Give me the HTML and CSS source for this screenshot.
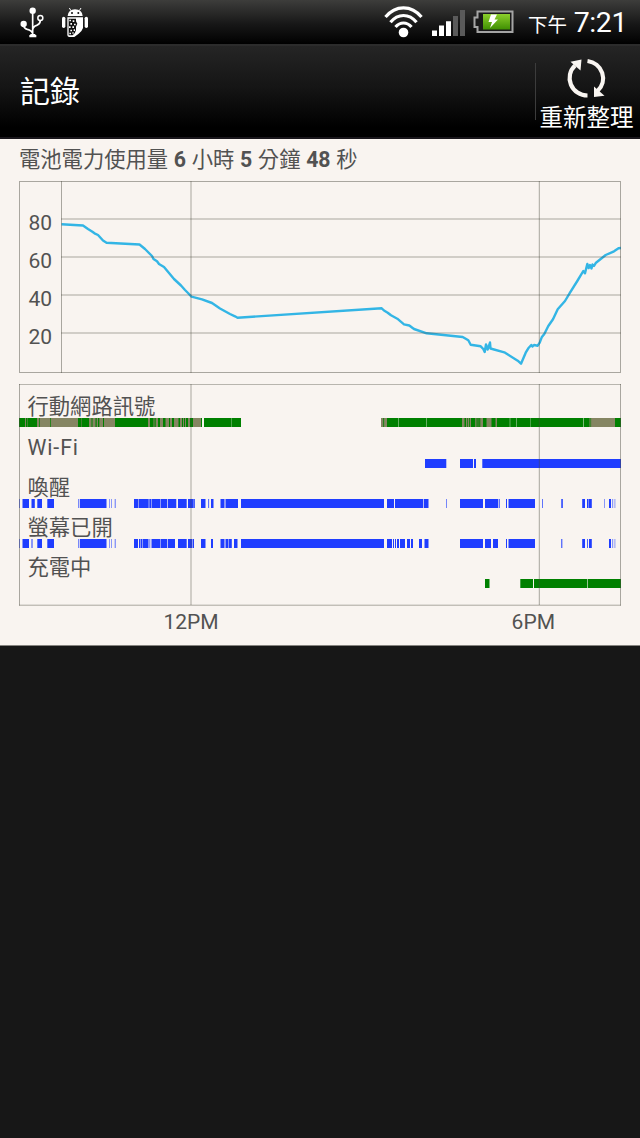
FILE: index.html
```html
<!DOCTYPE html>
<html lang="zh-Hant">
<head>
    <meta charset="UTF-8">
    <meta name="viewport" content="width=device-width, initial-scale=1.0">
    <title>記錄</title>
    <link rel="stylesheet" href="styles.css">
</head>
<body>

<!-- Status bar -->
<div class="status-bar">
    <svg class="icon-usb" width="26" height="34" viewBox="60 15 78 102">
        <g fill="none" stroke="#fff" stroke-width="5">
            <path d="M98 30V106M71 74Q71 85 82 88Q95 91 97 99M121 62Q120 73 110 76Q99 79 98 90"/>
            <circle cx="121" cy="54" r="7.5" stroke-width="4.5"/>
        </g>
        <g fill="#fff">
            <circle cx="98" cy="32" r="9.5"/>
            <circle cx="71" cy="72" r="9.5"/>
            <path d="M91 102H106V105H109V112H88V105H91z"/>
        </g>
    </svg>
    <svg class="icon-android" width="28" height="34" viewBox="183 15 84 102">
        <path d="M213 32L208 24M238 32L243 24" stroke="#fff" stroke-width="3"/>
        <path d="M203 48Q205 28 225 28Q246 28 248 48z" fill="#fff"/>
        <circle cx="216" cy="39" r="3" fill="#111"/>
        <circle cx="235" cy="39" r="3" fill="#111"/>
        <rect x="186" y="50" width="10" height="34" rx="5" fill="#fff"/>
        <rect x="254" y="50" width="10" height="34" rx="5" fill="#fff"/>
        <path d="M202 52H249V84Q246 94 236 101L223 111H207Q202 110 202 105z" fill="#fff"/>
        <path d="M206 56H228V64L232 71L228 80V90Q226 101 218 106H206z" fill="#111"/>
        <path d="M208 59h5v5h-5zM218 61h5v5h-5zM211 69h5v5h-5zM222 71h5v5h-5zM207 79h5v5h-5zM217 79h5v5h-5zM211 89h5v5h-5zM221 88h4v5h-4zM208 98h5v5h-5zM217 97h4v4h-4z" fill="#fff"/>
    </svg>
    <div class="spacer"></div>
    <svg class="icon-wifi" width="40" height="34" viewBox="0 0 40 34">
        <g fill="none" stroke="#fff" stroke-width="3.2">
            <path d="M1.5 12Q9 2.8 19.5 2.8T37.500 12"/>
            <path d="M6.500 17.300Q12 10.500 19.500 10.500T32.500 17.300"/>
            <path d="M11.500 22Q15 18 19.500 18T27.500 22"/>
        </g>
        <circle cx="19.500" cy="27.500" r="4.8" fill="#fff"/>
    </svg>
    <svg class="icon-signal" width="34" height="27" viewBox="0 0 34 27">
        <path d="M0 20.500h5V26H0zM7 15.500h5V26H7zM14 11.300h5V26h-5z" fill="#fff"/>
        <path d="M21 6h5v20h-5zM28 0h5v26h-5z" fill="#5a5a5a"/>
    </svg>
    <svg class="icon-battery" width="41" height="24" viewBox="0 0 41 24">
        <defs>
            <linearGradient id="charge" x1="0" y1="0" x2="0" y2="1">
                <stop offset="0" stop-color="#8ccf2c"/>
                <stop offset="1" stop-color="#3f8f02"/>
            </linearGradient>
        </defs>
        <path d="M4.500 1.500H39.500V22H4.500V17H1.500V7.500H4.500z" fill="#1a1a1a" stroke="#a5a5a5" stroke-width="2"/>
        <rect x="10" y="4" width="27" height="15.500" fill="url(#charge)"/>
        <path d="M18 4.500H24L21.500 9.500H25L17 18L19 12H15.500z" fill="#fff"/>
    </svg>
    <div class="clock"><span class="period">下午</span><span class="time">7:21</span></div>
</div>

<!-- Action bar -->
<div class="action-bar">
    <h1>記錄</h1>
    <div class="refresh">
        <svg width="42" height="42" viewBox="0 0 42 42">
            <g fill="none" stroke="#f9f5f1" stroke-width="4.200">
                <path d="M21.500 3A18 17.500 0 0 1 31.500 33"/>
                <path d="M21.500 37.500A18 17.500 0 0 1 9 7.500"/>
            </g>
            <path d="M4.500 3.800L15.500 1.500L14.500 12.500z" fill="#f9f5f1"/>
            <path d="M28 28.500V39L38.500 37.800z" fill="#f9f5f1"/>
        </svg>
        <span>重新整理</span>
    </div>
</div>

<!-- Battery history -->
<div class="history">
    <h2>電池電力使用量 <b>6</b> 小時 <b>5</b> 分鐘 <b>48</b> 秒</h2>

    <svg class="level-chart" width="602" height="192" viewBox="19 181 602 192">
        <polyline class="level" points="61.500,224.300 83,225.500 88,229 92,231.500 94.500,233.300 98,235 103,240.500 106.500,242.700 139.500,244.500 145,249 152,256 153.500,259 157,261.300 159,264 164,267 169,273 174,279 181,285.500 185,290 188,293 191.500,296.700 202,299.300 212,303 220,308.500 230,314 235,316.300 237.500,317.700 381.700,308.300 384,310.500 387.700,312.700 391,315.300 397.300,318.700 404,324.300 409.300,325.500 414,329 426.700,333.300 462.700,337 468.300,340.300 470.700,344.700 480.700,346.300 483.300,349 484.700,352 486,344.500 487.700,349.500 490,342.500 490.500,348.500 504.300,352.300 517.700,360.700 521,363.700 525.700,352.700 528.300,348.300 531.300,345 532.500,346.500 534,345 537.700,345.700 539.700,342.700 541.700,337.300 544.300,334 548.300,326 553,319.300 557.700,309.300 565,301 570,292.700 577.300,281 583.300,271 585,273.300 587.300,264 588.700,268 590,265 591.500,268.500 592.500,264.500 594,266 596,262.700 605.700,255 614,251.300 618.500,248.300 621,248"/>
        <g class="grid">
            <path d="M61 219H621M61 257H621M61 295H621M61 333H621"/>
            <path d="M61.500 181V373M191 181V373M539.300 181V373"/>
            <rect x="19.500" y="181.500" width="601" height="191"/>
        </g>
        <g class="axis">
            <text x="28.500" y="229.500">80</text>
            <text x="28.500" y="267.500">60</text>
            <text x="28.500" y="305.500">40</text>
            <text x="28.500" y="343.500">20</text>
        </g>
    </svg>

    <div class="tracks">
        <div class="track">
            <span>行動網路訊號</span>
            <svg class="cell" width="602" height="9" viewBox="19 0 602 9">
                <path class="weak" d="M19 4.500H202M381 4.500H388M460 4.500H499M589 4.500H616"/>
                <path class="good" d="M19 4.500h6M26 4.500h1M27.500 4.500h9.500M39 4.500h.7M50 4.500h.7M78 4.500h3M81.500 4.500h7.500M91.500 4.500h1M95.500 4.500h1.200M98 4.500h1.300M103 4.500h1M115 4.500h33M150 4.500h3.500M154.500 4.500h1.200M158 4.500h2M163 4.500h2.500M169 4.500h1M172 4.500h2M178.500 4.500h1.500M182 4.500h1M184 4.500h1M186 4.500h2M190 4.500h3M201 4.500h1M204 4.500H231.200M231.500 4.500H241M383.300 4.500h.8M387 4.500H398.200M398.600 4.500H426.300M426.700 4.500H462M464.500 4.500h1.500M467 4.500h.7M469 4.500h.8M471 4.500h2.200M474 4.500h1.200M476.500 4.500h.8M478.500 4.500h1"/>
                <path class="good" d="M471 4.500h4M477.500 4.500h.8M479.500 4.500h.8M483 4.500h3.500M491.500 4.500h4M497 4.500H509.800M510.200 4.500H516.200M516.600 4.500H530M530.300 4.500H583.200M583.700 4.500H589.500M590.500 4.500h.6M615 4.500H621"/>
            </svg>
        </div>
        <div class="track">
            <span class="latin">Wi-Fi</span>
            <svg class="on" width="602" height="9" viewBox="19 0 602 9">
                <path d="M425 4.500H446.300M460 4.500H473M474 4.500H476M482.300 4.500H621"/>
            </svg>
        </div>
        <div class="track">
            <span>喚醒</span>
            <svg class="on" width="602" height="9" viewBox="19 0 602 9">
                <path d="M19 4.500h.6M22.500 4.500h6.500M31.500 4.500h3.300M37.300 4.500h4.700M47.300 4.500h6.700M78.200 4.500h.6M79.800 4.500H106.500M109.200 4.500h.5M111.500 4.500h.5M114.800 4.500h.7M134 4.500h4M138.500 4.500h10.200M149.300 4.500h1.700M151.500 4.500h8.800M160.800 4.500H167M167.700 4.500H176.300M178 4.500H186.700M188 4.500H193.500M193.800 4.500h1M201 4.500h4.500M208.300 4.500h.8M211 4.500h2.500M220.500 4.500h3.500M224.500 4.500h1M226 4.500H238M241 4.500H384M387 4.500H394M395 4.500H423M423.700 4.500H428.500M446.200 4.500h.6M460 4.500H483M485 4.500H498M498.700 4.500h1M506 4.500h1M508.500 4.500H535M542.200 4.500h.7M561.300 4.500h1.500M582.200 4.500h2.800M587 4.500h1.300M588.700 4.500h3.100M604 4.500h.5M609 4.500h2M612.500 4.500h.6M614.700 4.500h.5"/>
            </svg>
        </div>
        <div class="track">
            <span>螢幕已開</span>
            <svg class="on" width="602" height="9" viewBox="19 0 602 9">
                <path d="M19 4.500h.6M22.500 4.500h6.500M31.500 4.500h1M37.300 4.500h4.700M47.300 4.500h6.700M78.200 4.500h.6M79.800 4.500H106.500M109.200 4.500h.5M111.500 4.500h.5M114.800 4.500h.7M134 4.500h4M139 4.500h1.500M141 4.500h1M142.500 4.500h6M149.500 4.500h.7M151.500 4.500h8.800M160.800 4.500H167M167.700 4.500H175M178 4.500H186.700M188 4.500H192M192.500 4.500h1.500M201 4.500h4.500M211 4.500h2M220.500 4.500h3.500M224.500 4.500h1M226 4.500h2.500M229 4.500h2.800M234 4.500h3.500M241 4.500H384M387 4.500h5M393 4.500h1M395 4.500h1M397 4.500h2M400 4.500h5M407 4.500h3M411 4.500h2M419 4.500h3M424.500 4.500h4M460 4.500H483M485 4.500H491M493 4.500H498M506 4.500h1M508.500 4.500H535M561.300 4.500h1M582.200 4.500h2.800M587 4.500h.8M589 4.500h2.800M609 4.500h2M612.500 4.500h.6M614.700 4.500h.5"/>
            </svg>
        </div>
        <div class="track">
            <span>充電中</span>
            <svg class="charging" width="602" height="9" viewBox="19 0 602 9">
                <path class="good" d="M485 4.500h4.500M520.300 4.500H533M534 4.500H587.200M587.800 4.500H621"/>
            </svg>
        </div>
        <svg class="hours" width="602" height="222" viewBox="19 384 602 222">
            <g class="grid">
                <path d="M191 384V605M539.300 384V605"/>
                <path d="M19.500 384V605.500M620.500 384V605.500M19 384.300H621M19 605.200H621"/>
            </g>
        </svg>
    </div>

    <div class="hour-labels">
        <span>12PM</span>
        <span>6PM</span>
    </div>
</div>

</body>
</html>
```

FILE: styles.css
```css
* {
    box-sizing: border-box;
}

body {
    margin: 0;
    min-height: 1138px;
    background-color: #171717;
    font-family: Roboto, "Noto Sans CJK TC", sans-serif;
    color: #525252;
}

svg {
    display: block;
    flex: none;
}

/* Status bar */
.status-bar {
    display: flex;
    align-items: flex-start;
    height: 44px;
    padding: 5px 13px 0 20px;
    background: linear-gradient(#3d3d3b, #171717 55%, #000);
    color: #fff;
}

.icon-android {
    margin-left: 15px;
}

.spacer {
    flex: 1;
}

.icon-wifi {
    margin: 0 8px 0 0;
}

.icon-signal {
    margin: 5px 7px 0 0;
}

.icon-battery {
    margin: 5px 14px 0 0;
}

.clock {
    display: flex;
    align-items: baseline;
    width: 99px;
    line-height: 35px;
    white-space: nowrap;
}

.period {
    width: 48px;
    font-size: 19.5px;
}

.time {
    font-size: 28.5px;
    letter-spacing: -0.4px;
}

/* Action bar */
.action-bar {
    display: flex;
    align-items: center;
    justify-content: space-between;
    height: 95px;
    padding-left: 20px;
    border-top: 2px solid #2c2c2c;
    border-bottom: 2px solid #19161b;
    background: linear-gradient(#252525, #151515 45%, #000 90%);
    color: #fff;
}

.action-bar h1 {
    margin: 0 0 5px;
    font-size: 30px;
    font-weight: 400;
}

.refresh {
    display: flex;
    flex-direction: column;
    align-items: center;
    width: 105px;
    height: 57px;
    margin-bottom: 1px;
    padding-right: 3px;
    border-left: 1px solid #3c3c3c;
}

.refresh svg {
    margin-top: -5px;
}

.refresh span {
    font-size: 23.5px;
    line-height: 36px;
    white-space: nowrap;
}

/* Battery history */
.history {
    height: 507px;
    padding: 0 19px;
    border-bottom: 1px solid #85837f;
    background-color: #f9f4f0;
}

.history h2 {
    height: 42px;
    margin: 0;
    font-size: 21.3px;
    font-weight: 400;
    line-height: 41px;
    word-spacing: 0.4px;
    white-space: nowrap;
}

.grid {
    fill: none;
    stroke: #46463c;
    stroke-opacity: 0.45;
}

.level {
    fill: none;
    stroke: #33b5e5;
    stroke-width: 2.4;
    stroke-linejoin: round;
}

.axis {
    fill: #525252;
    font-size: 21px;
}

/* Tracks */
.tracks {
    position: relative;
    height: 222px;
    margin-top: 11px;
    padding-top: 3.4px;
}

.track {
    height: 40.25px;
}

.track span {
    display: block;
    height: 31px;
    padding-left: 8.5px;
    font-size: 21.3px;
    line-height: 39px;
}

.track .latin {
    letter-spacing: 0.9px;
}

.track path {
    fill: none;
    stroke-width: 8.8;
}

.on {
    stroke: #1f3dff;
}

.weak {
    stroke: #858562;
}

.good {
    stroke: #008000;
}

.hours {
    position: absolute;
    top: 0;
    left: 0;
}

.hour-labels {
    display: flex;
    justify-content: space-between;
    padding: 0 66px 0 144.5px;
    font-size: 21px;
    line-height: 32px;
}
```
